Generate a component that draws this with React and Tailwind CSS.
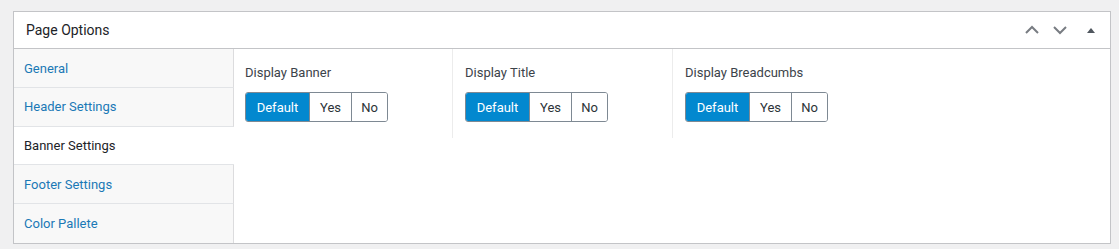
import React from 'react';
import { useState } from 'react';

const tabs = ['General', 'Header Settings', 'Banner Settings', 'Footer Settings', 'Color Pallete'];

const fields = [
  { label: 'Display Banner' },
  { label: 'Display Title' },
  { label: 'Display Breadcumbs' },
];

const Toggle = () => {
  const [value, setValue] = useState('Default');
  return (
    <div className="flex h-[30px] w-fit rounded-[3px] border border-[#7e8993] overflow-hidden">
      {['Default', 'Yes', 'No'].map((opt, i) => (
        <button
          key={opt}
          onClick={() => setValue(opt)}
          className={
            (value === opt ? 'bg-[#0288cf] text-white ' : 'bg-white text-[#2c3338] ') +
            (i > 0 ? 'border-l border-[#7e8993] ' : '') +
            (opt === 'Default' ? 'w-[63px]' : opt === 'Yes' ? 'w-[42px]' : 'w-[36px]') +
            ' text-[13px] leading-none'
          }
        >
          {opt}
        </button>
      ))}
    </div>
  );
};

const App = () => {
  const [active, setActive] = useState('Banner Settings');
  return (
    <div className="h-[249px] bg-[#f0f0f1] pt-[11px] pl-[13px] pr-[8px] font-['Roboto',sans-serif]">
      <div className="border border-[#c3c4c7] bg-white">
        <div className="flex items-center justify-between h-[37px] border-b border-[#c3c4c7] pl-3 pr-[14px]">
          <h2 className="text-[14px] text-[#1d2327]">Page Options</h2>
          <div className="flex items-center text-[#787c82]">
            <svg width="16" height="16" viewBox="0 0 16 16" className="mr-[12px]">
              <path d="M2 11 L8 5 L14 11" fill="none" stroke="currentColor" strokeWidth="2" />
            </svg>
            <svg width="16" height="16" viewBox="0 0 16 16" className="mr-[18px]">
              <path d="M2 5 L8 11 L14 5" fill="none" stroke="currentColor" strokeWidth="2" />
            </svg>
            <svg width="10" height="10" viewBox="0 0 10 10">
              <path d="M1 8 L5 3 L9 8 Z" fill="#50575e" />
            </svg>
          </div>
        </div>
        <div className="flex h-[194px]">
          <ul className="w-[220px] shrink-0 flex flex-col">
            {tabs.map((t, i) => (
              <li
                key={t}
                onClick={() => setActive(t)}
                className={
                  'h-[39px] flex items-center pl-[10px] pt-px text-[13px] cursor-pointer ' +
                  (i < tabs.length - 1 ? 'border-b border-[#e2e4e7] ' : 'h-[38px] ') +
                  (active === t
                    ? 'bg-white text-[#1d2327]'
                    : 'bg-[#f8f8f8] text-[#1b79b6] border-r border-r-[#dcdcde]')
                }
              >
                {t}
              </li>
            ))}
          </ul>
          <div className="flex items-start -ml-px">
            {fields.map((f, i) => (
              <div
                key={f.label}
                className={
                  'w-[220px] pt-[14px] pb-[16px] px-3 ' +
                  (i < fields.length - 1 ? 'border-r border-[#ececec]' : '')
                }
              >
                <div className="text-[13px] leading-5 text-[#3c434a] mb-[9px]">{f.label}</div>
                <Toggle />
              </div>
            ))}
          </div>
        </div>
      </div>
    </div>
  );
};

export default App;
